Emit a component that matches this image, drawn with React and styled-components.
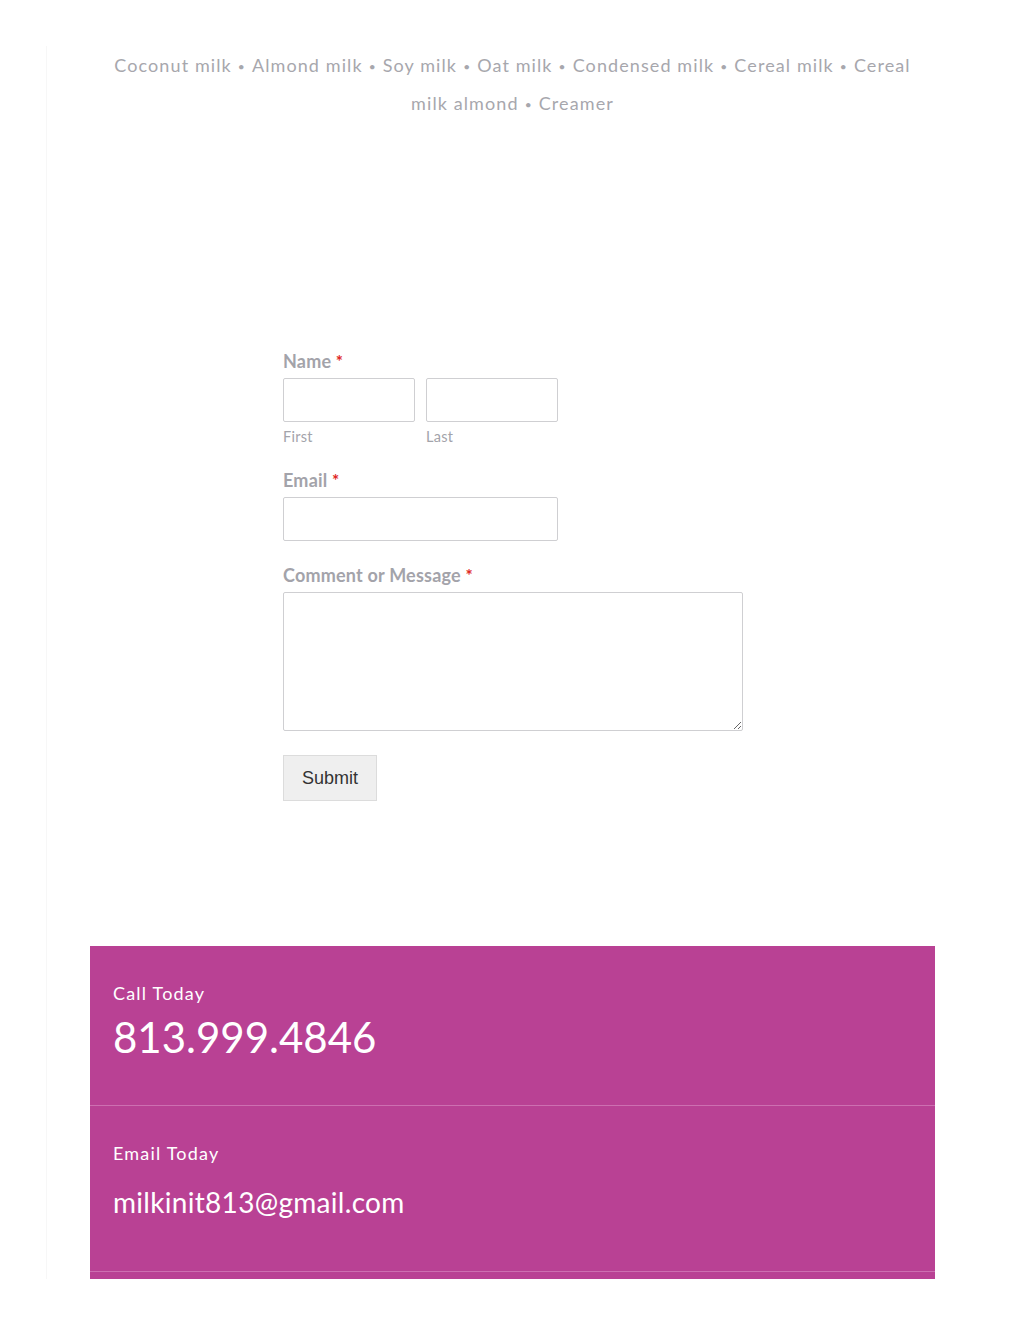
import React from 'react';
import styled, { createGlobalStyle } from 'styled-components';

const GlobalStyle = createGlobalStyle`
  html, body {
    margin: 0;
    padding: 0;
    background: #ffffff;
  }
  body {
    font-family: Lato, "Open Sans", sans-serif;
  }
`;

const milks = [
  'Coconut milk', 'Almond milk', 'Soy milk', 'Oat milk', 'Condensed milk',
  'Cereal milk', 'Cereal milk almond', 'Creamer',
];

function App () {
  return (
    <>
      <GlobalStyle />
      <Page>
        <Panel>
          <Content>
            <MilkList>
              {milks.map((m, i) => (
                <React.Fragment key={m}>
                  {i > 0 && <Bullet>•</Bullet>}
                  {m}
                </React.Fragment>
              ))}
            </MilkList>

            <Form onSubmit={e => e.preventDefault()}>
              <Field>
                <Label>Name <Req>*</Req></Label>
                <NameRow>
                  <SubField>
                    <Input type="text" />
                    <SubLabel>First</SubLabel>
                  </SubField>
                  <SubField>
                    <Input type="text" />
                    <SubLabel>Last</SubLabel>
                  </SubField>
                </NameRow>
              </Field>

              <Field>
                <Label>Email <Req>*</Req></Label>
                <Input type="email" $wide />
              </Field>

              <Field>
                <Label>Comment or Message <Req>*</Req></Label>
                <TextArea />
              </Field>

              <SubmitButton type="submit">Submit</SubmitButton>
            </Form>

            <Contact>
              <ContactBlock>
                <ContactTitle>Call Today</ContactTitle>
                <Phone>813.999.4846</Phone>
              </ContactBlock>
              <ContactBlock>
                <ContactTitle>Email Today</ContactTitle>
                <EmailText>milkinit813@gmail.com</EmailText>
              </ContactBlock>
            </Contact>
          </Content>
        </Panel>
      </Page>
    </>
  );
}

export default App;

const Page = styled.div`
  min-height: 1325px;
  padding-top: 46px;
  box-sizing: border-box;
`;

const Panel = styled.div`
  margin: 0 46px;
  border-left: 1px solid #f7f7f7;
  background: #ffffff;
`;

const Content = styled.main`
  width: 845px;
  margin: 0 auto;
`;

const MilkList = styled.p`
  margin: 0;
  padding: 0 18px;
  text-align: center;
  font-size: 18px;
  line-height: 38px;
  letter-spacing: 1.1px;
  color: #a7a7ad;
`;

const Bullet = styled.span`
  display: inline-block;
  margin: 0 6px;
  font-size: 12px;
  line-height: 12px;
  vertical-align: middle;
`;

const Form = styled.form`
  width: 460px;
  margin: 227px 0 0 193px;
  display: flex;
  flex-direction: column;
  align-items: flex-start;
`;

const Field = styled.div`
  display: flex;
  flex-direction: column;
  margin-bottom: 22px;
  width: 100%;
`;

const Label = styled.label`
  font-size: 18px;
  line-height: 24px;
  font-weight: 700;
  letter-spacing: 0.2px;
  color: #a3a3aa;
  margin-bottom: 4px;
`;

const Req = styled.span`
  color: #e0271f;
  font-weight: 700;
  font-size: 17px;
`;

const NameRow = styled.div`
  display: flex;
  gap: 11px;
`;

const SubField = styled.div`
  display: flex;
  flex-direction: column;
`;

const SubLabel = styled.span`
  margin-top: 6px;
  font-size: 14.5px;
  line-height: 18px;
  letter-spacing: 0.3px;
  color: #a3a3aa;
`;

const Input = styled.input`
  box-sizing: border-box;
  width: ${p => (p.$wide ? '275px' : '132px')};
  height: 44px;
  margin: 0;
  border: 1px solid #cfcfd2;
  border-radius: 2px;
  background: #fff;
`;

const TextArea = styled.textarea`
  box-sizing: border-box;
  width: 460px;
  height: 139px;
  margin: 0;
  border: 1px solid #cfcfd2;
  border-radius: 2px;
  background: #fff;
`;

const SubmitButton = styled.button`
  margin-top: 2px;
  width: 94px;
  height: 46px;
  background: #efefef;
  border: 1px solid #dcdcdc;
  border-radius: 0;
  font-family: "Liberation Sans", Arial, sans-serif;
  font-size: 18px;
  color: #333;
`;

const Contact = styled.section`
  margin-top: 145px;
  background: #b94194;
  padding-bottom: 7px;
`;

const ContactBlock = styled.div`
  padding: 34px 23px 0;
  height: 160px;
  box-sizing: border-box;
  border-bottom: 1px solid #cd6fb1;
  color: #fff;
  &:last-child {
    height: 166px;
  }
`;

const ContactTitle = styled.div`
  font-size: 18px;
  line-height: 26px;
  letter-spacing: 1.2px;
`;

const Phone = styled.div`
  margin-top: 4px;
  font-size: 42px;
  line-height: 54px;
`;

const EmailText = styled.div`
  margin-top: 19px;
  font-size: 28px;
  line-height: 34px;
  letter-spacing: 0.3px;
`;
